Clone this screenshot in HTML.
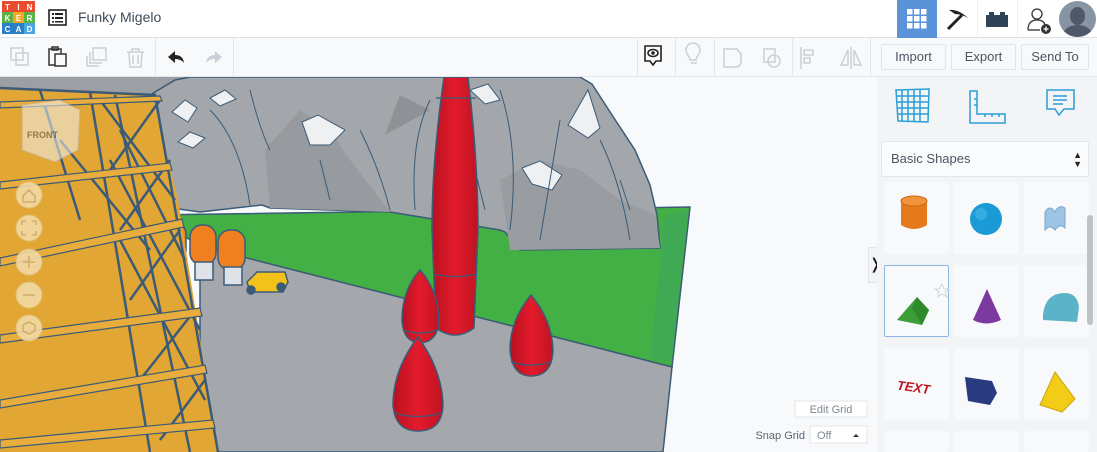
<!DOCTYPE html>
<html><head><meta charset="utf-8"><style>
*{margin:0;padding:0;box-sizing:border-box}
html,body{width:1097px;height:452px;overflow:hidden}
body{background:#f8f9fa;font-family:"Liberation Sans",sans-serif;position:relative}
.top{position:absolute;left:0;top:0;width:1097px;height:38px;background:#fff;border-bottom:1px solid #dde1e6}
.tb{position:absolute;left:0;top:38px;width:1097px;height:39px;background:#f8f9fa;border-bottom:1px solid #e3e6ea}
.btn{position:absolute;top:6px;height:26px;border:1px solid #e0e3e7;border-radius:2px;background:#f8f9fa;color:#4a5662;font-size:13px;text-align:center;line-height:24px}
.panel{position:absolute;left:877px;top:77px;width:220px;height:375px;background:#f3f4f6;overflow:hidden}
.cell{position:absolute;width:65px;height:72px;background:#f8f9fa;border-radius:2px}
.sep{position:absolute;top:0;width:1px;height:39px;background:#e3e6ea}
</style></head><body>
<div class="top">
 <div style="position:absolute;left:0;top:0;width:38px;height:36px">
  <svg width="38" height="36">
   <rect x="2" y="1" width="11" height="11" fill="#e84b2e"/><rect x="13" y="1" width="11" height="11" fill="#e84b2e"/><rect x="24" y="1" width="11" height="11" fill="#e84b2e"/>
   <rect x="2" y="12" width="11" height="11" fill="#59b345"/><rect x="13" y="12" width="11" height="11" fill="#f5a623"/><rect x="24" y="12" width="11" height="11" fill="#59b345"/>
   <rect x="2" y="23" width="11" height="11" fill="#2a7fc9"/><rect x="13" y="23" width="11" height="11" fill="#2a7fc9"/><rect x="24" y="23" width="11" height="11" fill="#4aa6de"/>
   <g fill="#fff" font-size="8" font-weight="bold" font-family="Liberation Sans" text-anchor="middle">
   <text x="7.5" y="10">T</text><text x="18.5" y="10">I</text><text x="29.5" y="10">N</text>
   <text x="7.5" y="21">K</text><text x="18.5" y="21">E</text><text x="29.5" y="21">R</text>
   <text x="7.5" y="32">C</text><text x="18.5" y="32">A</text><text x="29.5" y="32">D</text></g>
  </svg>
 </div>
 <svg style="position:absolute;left:48px;top:9px" width="20" height="18"><rect x="1" y="1" width="17" height="15" fill="none" stroke="#222" stroke-width="1.6"/><g fill="#222"><rect x="4" y="4" width="2" height="2"/><rect x="7" y="4" width="8" height="2"/><rect x="4" y="8" width="2" height="2"/><rect x="7" y="8" width="8" height="2"/><rect x="4" y="12" width="2" height="1.5"/><rect x="7" y="12" width="8" height="1.5"/></g></svg>
 <div style="position:absolute;left:78px;top:9px;font-size:14px;color:#3d4a57">Funky Migelo</div>
 <div style="position:absolute;left:897px;top:0;width:40px;height:38px;background:#5b93d8"></div>
 <svg style="position:absolute;left:906px;top:8px" width="22" height="22"><g fill="#fff"><rect x="1" y="1" width="5.5" height="5.5"/><rect x="8" y="1" width="5.5" height="5.5"/><rect x="15" y="1" width="5.5" height="5.5"/><rect x="1" y="8" width="5.5" height="5.5"/><rect x="8" y="8" width="5.5" height="5.5"/><rect x="15" y="8" width="5.5" height="5.5"/><rect x="1" y="15" width="5.5" height="5.5"/><rect x="8" y="15" width="5.5" height="5.5"/><rect x="15" y="15" width="5.5" height="5.5"/></g></svg>
 <svg style="position:absolute;left:945px;top:7px" width="28" height="24"><path d="M4 3 Q14 2 24 12 Q18 7 10 7 Z" fill="#222"/><path d="M17 8 L3 22" stroke="#222" stroke-width="3"/></svg>
 <div style="position:absolute;left:977px;top:0;width:1px;height:38px;background:#eee"></div>
 <svg style="position:absolute;left:985px;top:10px" width="24" height="18"><path d="M1 5 h3 v-3 h5 v3 h6 v-3 h5 v3 h3 v12 h-22z" fill="#2f4256"/></svg>
 <div style="position:absolute;left:1017px;top:0;width:1px;height:38px;background:#eee"></div>
 <svg style="position:absolute;left:1026px;top:6px" width="28" height="28"><circle cx="11" cy="8" r="5" fill="none" stroke="#333" stroke-width="1.3"/><path d="M2 24 Q2 14 11 14 Q18 14 19 19" fill="none" stroke="#333" stroke-width="1.3"/><path d="M2 24 h12" stroke="#333" stroke-width="1.3"/><circle cx="20" cy="23" r="5" fill="#333"/><path d="M17.5 23h5M20 20.5v5" stroke="#fff" stroke-width="1.3"/></svg>
 <div style="position:absolute;left:1059px;top:1px;width:37px;height:36px;border-radius:50%;background:#8794a3;overflow:hidden"><div style="position:absolute;left:11px;top:6px;width:15px;height:18px;border-radius:50%;background:#4e5866"></div><div style="position:absolute;left:4px;top:24px;width:29px;height:20px;border-radius:50%;background:#4e5866"></div></div>
</div>
<div class="tb">
 <svg style="position:absolute;left:0;top:0" width="240" height="39">
  <g fill="none" stroke="#c9d0d7" stroke-width="1.5"><rect x="11" y="10" width="12" height="12"/><rect x="16" y="15" width="12" height="12"/></g>
  <g fill="none" stroke="#333" stroke-width="1.5"><rect x="49" y="11" width="12" height="16"/><rect x="55" y="16" width="11" height="12" fill="#f8f9fa"/><rect x="52" y="9" width="6" height="3"/></g>
  <g fill="none" stroke="#c9d0d7" stroke-width="1.5"><rect x="93" y="10" width="13" height="12"/><path d="M90 14v11h12"/><path d="M87 18v10h12"/></g>
  <g fill="none" stroke="#c9d0d7" stroke-width="1.5"><path d="M127 14h17M132 14v-3h7v3M129 14l1 15h11l1-15M133 17v9M138 17v9"/></g>
  <path d="M168 19 l7 -6 v4 q8 0 9 8 q-3-4-9-4 v4z" fill="#222"/>
  <path d="M222 19 l-7 -6 v4 q-8 0 -9 8 q3-4 9-4 v4z" fill="#c9d0d7"/>
 </svg>
 <div class="sep" style="left:155px"></div><div class="sep" style="left:233px"></div>
 <div class="sep" style="left:637px"></div><div class="sep" style="left:675px"></div><div class="sep" style="left:714px"></div><div class="sep" style="left:792px"></div><div class="sep" style="left:870px"></div>
 <svg style="position:absolute;left:640px;top:0" width="230" height="39">
  <path d="M5 8h16v15h-5l-3 4-3-4h-5z" fill="none" stroke="#222" stroke-width="1.6"/><ellipse cx="13" cy="15" rx="5" ry="3.5" fill="none" stroke="#222" stroke-width="1.6"/><circle cx="13" cy="15" r="1.8" fill="#222"/>
  <g fill="none" stroke="#c9d0d7" stroke-width="1.5"><path d="M51 25h6M50 22c0-4-4-5-4-10a7 7 0 0114 0c0 5-4 6-4 10z"/>
  <path d="M84 11h13l4 5v8a5 5 0 01-5 5h-12z"/>
  <rect x="124" y="11" width="11" height="13"/><circle cx="134" cy="23" r="6"/>
  <path d="M161 9v22M164 12h9v5h-9zM164 20h6v5h-6z"/>
  <path d="M211 9v22M208 12l-7 15h7zM214 12l7 15h-7z"/></g>
 </svg>
 <div class="btn" style="left:881px;width:65px">Import</div>
 <div class="btn" style="left:951px;width:65px">Export</div>
 <div class="btn" style="left:1021px;width:68px">Send To</div>
</div>

<svg style="position:absolute;left:0;top:77px" width="868" height="375" viewBox="0 77 868 375">
 <rect x="0" y="77" width="868" height="375" fill="#f8f9fa"/>
 <polygon points="150,215 690,207 672,367 200,246" fill="#42b045" stroke="#3b5b78" stroke-width="1.5"/>
 <polygon points="665,215 688,210 672,362 650,358" fill="#3fa85a" opacity=".7"/>
 <polygon points="200,246 672,367 663,452 200,452" fill="#a4a8ac" stroke="#3b5b78" stroke-width="1.5"/>
 <polygon points="0,77 200,77 150,120 0,100" fill="#9c9fa3"/>
 <polygon points="150,205 150,95 175,80 190,77 580,77 592,84 612,115 635,150 650,185 657,215 660,248 520,250 505,232 500,230 390,212 270,208 262,205 200,212" fill="#a3a6aa" stroke="#3b5b78" stroke-width="1.5"/>
 <polygon points="270,208 265,150 300,110 330,130 350,160 390,212" fill="#979a9e"/>
 <polygon points="510,250 500,180 540,160 580,170 620,200 655,215 660,248" fill="#999ca0"/>
 <polygon points="430,110 400,95 385,135" fill="#8e9195"/>
 <g fill="#eef0f2" stroke="#3b5b78" stroke-width="1">
  <polygon points="172,112 185,100 197,108 188,122"/>
  <polygon points="178,142 190,132 205,138 193,148"/>
  <polygon points="210,98 225,90 236,99 220,106"/>
  <polygon points="302,122 318,115 345,130 330,145 310,145"/>
  <polygon points="470,90 488,84 500,100 485,104"/>
  <polygon points="522,168 540,161 562,175 552,190 532,184"/>
  <polygon points="568,125 588,90 600,128 588,138"/>
 </g>
 <g fill="none" stroke="#3b5b78" stroke-width="1">
  <path d="M210 110 q30 30 40 95M250 90 q10 40 20 60M360 130 q20 40 30 80M430 100 q-20 40 -15 110M500 90 q20 60 10 140M560 120 q-10 60 -20 120M600 140 q20 40 30 100M320 160 l10 40M470 150 l15 60M620 180l10 30"/>
 </g>
 <g stroke="#3b5b78" stroke-width="1.5">
  <rect x="160" y="222" width="26" height="40" rx="12" fill="#f07f1f"/>
  <rect x="190" y="225" width="26" height="40" rx="12" fill="#f07f1f"/>
  <rect x="218" y="230" width="27" height="40" rx="12" fill="#f07f1f"/>
  <rect x="195" y="262" width="18" height="18" fill="#dfe3e7"/>
  <rect x="224" y="267" width="18" height="18" fill="#dfe3e7"/>
  <path d="M247 282 l10-10 h28 l3 10 l-5 10 h-33z" fill="#f2c21a"/>
  <circle cx="251" cy="290" r="4" fill="#3b5b78"/><circle cx="281" cy="287" r="4" fill="#3b5b78"/>
 </g>
 <polygon points="0,88 152,95 178,200 218,452 0,452" fill="#e1a634"/>
 <g stroke="#3b5b78" stroke-width="2.5" fill="none">
  <path d="M0 88 L155 95 L218 452"/>
  <path d="M90 92 L150 452"/><path d="M40 90 L80 220"/><path d="M115 95 L190 452"/>
  <path d="M100 100 L175 200 M120 130 L185 260 M110 160 L200 330 M120 240 L205 400 M60 140 L150 250"/>
  <path d="M160 100 L110 170 M170 160 L120 230 M180 230 L130 300 M195 310 L140 380 M205 380 L160 440"/>
 </g>
 <g stroke="#3b5b78" stroke-width="1.2" fill="#e8ad3c">
  <polygon points="0,102 160,96 162,101 0,108"/>
  <polygon points="0,182 170,163 172,170 0,189"/>
  <polygon points="0,258 182,219 184,227 0,266"/>
  <polygon points="0,335 200,308 202,316 0,343"/>
  <polygon points="0,400 205,365 207,373 0,408"/>
  <polygon points="0,440 213,420 215,428 0,448"/>
 </g>
 <g opacity=".55">
  <polygon points="22,105 60,100 80,110 78,150 55,162 22,150" fill="#f3f3f3" stroke="#bbb"/>
  <text x="27" y="138" font-size="9" fill="#555" font-weight="bold">FRONT</text>
 </g>
 <g fill="#f3d9a4" stroke="#e3c27a" stroke-width="1" opacity=".9">
  <circle cx="29" cy="195" r="13"/><circle cx="29" cy="228" r="13"/><circle cx="29" cy="262" r="13"/><circle cx="29" cy="295" r="13"/><circle cx="29" cy="328" r="13"/>
 </g>
 <g stroke="#c9a865" stroke-width="1.3" fill="none"><path d="M23 196l6-6 6 6v6h-12z"/><path d="M22 225v-4h4M36 225v-4h-4M22 231v4h4M36 231v4h-4"/><path d="M23 262h12M29 256v12"/><path d="M23 295h12"/><path d="M29 322l6 3v6l-6 3-6-3v-6z"/></g>
 <defs><linearGradient id="r" x1="0" x2="1"><stop offset="0" stop-color="#b8111f"/><stop offset=".5" stop-color="#e31b2c"/><stop offset="1" stop-color="#bf1322"/></linearGradient></defs>
 <g fill="url(#r)" stroke="#3b5b78" stroke-width="1.5">
  <path d="M444 77 L468 77 Q478 160 478 230 L474 328 Q455 342 436 328 L432 230 Q432 160 444 77Z"/>
  <path d="M420 270 Q402 290 402 320 Q403 342 420 343 Q438 342 439 320 Q438 290 420 270Z"/>
  <path d="M531 295 Q510 320 510 350 Q512 376 531 376 Q552 376 553 350 Q552 320 531 295Z"/>
  <path d="M418 337 Q393 370 393 405 Q395 431 418 431 Q442 431 443 405 Q442 370 418 337Z"/>
 </g>
 <g stroke="#3b5b78" stroke-width="1.2" fill="none">
  <path d="M436 98 h40"/><path d="M433 274 q22 5 44 0"/>
  <path d="M403 330 q17 6 35 0"/><path d="M511 362 q20 6 41 0"/><path d="M394 413 q24 7 48 0"/>
 </g>
 <rect x="795" y="401" width="72" height="16" fill="#fff" stroke="#e2e5e9"/>
 <text x="831" y="413" font-size="11" fill="#7d8893" text-anchor="middle" font-family="Liberation Sans">Edit Grid</text>
 <text x="805" y="439" font-size="11" fill="#5a6673" text-anchor="end" font-family="Liberation Sans">Snap Grid</text>
 <rect x="810" y="426" width="57" height="17" fill="#fff" stroke="#e2e5e9"/>
 <text x="817" y="439" font-size="11" fill="#7d8893" font-family="Liberation Sans">Off</text>
 <path d="M853 437l3-3 3 3z" fill="#333"/>
</svg>
<div style="position:absolute;left:868px;top:247px;width:10px;height:36px;background:#f3f4f6;border:1px solid #e0e3e7;border-right:none;font-size:15px;line-height:34px;color:#111;text-align:center">&#x276D;</div>

<div class="panel">
 <svg style="position:absolute;left:0;top:0" width="220" height="60">
  <g stroke="#2a9fd6" stroke-width="1.5" fill="none">
   <path d="M19 13 L52 12 L51 45 L21 44 Z"/><path d="M25 13v31M31 13v31M37 12v32M43 12v33M20 19h32M20 25h31M21 31h30M21 37h30"/>
   <path d="M93 14h7v23h28v9h-35z"/><path d="M100 22h-3M100 28h-3M108 37v3M115 37v3M122 37v3"/>
   <path d="M170 13h27v19h-10l-5 6-4-6h-8z"/><path d="M176 19h14M176 23h14M176 27h10"/>
  </g>
 </svg>
 <div style="position:absolute;left:4px;top:64px;width:208px;height:36px;background:#fafbfc;border:1px solid #e3e6ea;border-radius:2px;font-size:13px;color:#4a5662;line-height:34px;padding-left:9px">Basic Shapes<span style="position:absolute;right:6px;top:9px;font-size:9px;color:#222;line-height:9px">▲<br>▼</span></div>
 <div class="cell" style="left:7px;top:105px"></div><div class="cell" style="left:77px;top:105px"></div><div class="cell" style="left:147px;top:105px"></div>
 <div class="cell" style="left:7px;top:188px;border:1px solid #8fb5e6"></div><div class="cell" style="left:77px;top:188px"></div><div class="cell" style="left:147px;top:188px"></div>
 <div class="cell" style="left:7px;top:271px"></div><div class="cell" style="left:77px;top:271px"></div><div class="cell" style="left:147px;top:271px"></div>
 <div class="cell" style="left:7px;top:354px;height:21px"></div><div class="cell" style="left:77px;top:354px;height:21px"></div><div class="cell" style="left:147px;top:354px;height:21px"></div>
 <div style="position:absolute;left:210px;top:138px;width:6px;height:110px;border-radius:3px;background:#bfc3c8"></div>
 <svg style="position:absolute;left:0;top:100px" width="210" height="275">
  <path d="M24 24 v24 q13 8 26 0 v-24z" fill="#e47a1b"/><ellipse cx="37" cy="24" rx="13" ry="5" fill="#f0933a" stroke="#c86510"/>
  <circle cx="109" cy="42" r="16" fill="#1a9ad6"/><circle cx="104" cy="37" r="6" fill="#4ab7e8" opacity=".6"/>
  <path d="M168 35 q5-8 10 0 q4-8 10-4 v20 q-5-5-10 2 q-5-6-10 0z" fill="#9cc4e4" stroke="#7aa8cf"/>
  <path d="M20 143 L40 120 L52 133 L45 148 Z" fill="#3b9e38"/><path d="M40 120 L52 133 L45 148 L35 131Z" fill="#2f8a2c"/>
  <path d="M62 112 l3 -5 l2 5 l5 0 l-4 3 l2 5 l-5 -3 l-4 3 l1 -5 l-4 -3z" fill="none" stroke="#cfd3d8"/>
  <path d="M110 112 L96 143 q13 7 28 0z" fill="#7b3aa0"/>
  <path d="M166 138 q2 -22 22 -22 q12 0 14 14 l-2 15 l-34 -2z" fill="#5ab3c6"/>
  <text x="20" y="215" font-size="13" font-weight="bold" fill="#c0141f" font-style="italic" transform="rotate(8 38 210)">TEXT</text>
  <path d="M88 200 l27 4 l5 12 l-7 12 l-22 -4z" fill="#2a3a80"/>
  <path d="M178 195 L163 228 L185 235 L198 222Z" fill="#f2cc17" stroke="#c9a40e"/>
 </svg>
</div>
</body></html>
